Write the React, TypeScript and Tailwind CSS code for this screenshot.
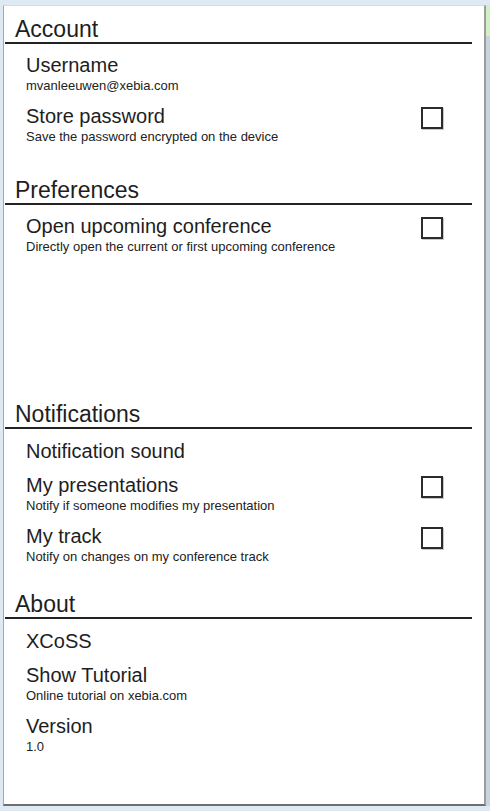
import React from "react";

type Item = { title: string; desc?: string; check?: boolean };

function Checkbox() {
  return (
    <div className="mt-[3px] w-[22px] h-[22px] shrink-0 border-2 border-[#2b2b2b] bg-white shadow-[1px_1px_0_0_#c8c8c8]" />
  );
}

function Row({ item }: { item: Item }) {
  return (
    <div className="flex w-[417px] justify-between">
      <div className="flex flex-col">
        <div className="text-[20px] leading-[24px] text-[#1e1e1e]">{item.title}</div>
        {item.desc && (
          <div className="text-[13px] leading-[17px] text-[#222]">{item.desc}</div>
        )}
      </div>
      {item.check && <Checkbox />}
    </div>
  );
}

function Section({
  title,
  items,
  mt,
  itemsMt,
}: {
  title: string;
  items: Item[];
  mt: string;
  itemsMt: string;
}) {
  return (
    <div className={mt}>
      <div className="ml-px w-[467px] border-b-2 border-[#222] pl-[10px] text-[23px] leading-[26px] text-[#1e1e1e]">
        {title}
      </div>
      <div className={`${itemsMt} ml-[22px] flex flex-col gap-[10px]`}>
        {items.map((it) => (
          <Row key={it.title} item={it} />
        ))}
      </div>
    </div>
  );
}

export default function App() {
  return (
    <div className="relative h-[811px] w-[490px] overflow-hidden bg-[#dfe9f4] font-['Liberation_Sans',Arial,sans-serif]">
      <div className="flex pl-[3px] pt-[5px]">
        <div className="h-[801px] w-[483px] border-l border-r-2 border-b-2 border-t border-l-[#a8a8a8] border-r-[#9c9c9c] border-b-[#6e6e6e] border-t-[#d4dde6] bg-white">
          <Section
            title="Account"
            mt="mt-[10px]"
            itemsMt="mt-[9px]"
            items={[
              { title: "Username", desc: "mvanleeuwen@xebia.com" },
              {
                title: "Store password",
                desc: "Save the password encrypted on the device",
                check: true,
              },
            ]}
          />
          <Section
            title="Preferences"
            mt="mt-[32px]"
            itemsMt="mt-[9px]"
            items={[
              {
                title: "Open upcoming conference",
                desc: "Directly open the current or first upcoming conference",
                check: true,
              },
            ]}
          />
          <Section
            title="Notifications"
            mt="mt-[146px]"
            itemsMt="mt-[10px]"
            items={[
              { title: "Notification sound" },
              {
                title: "My presentations",
                desc: "Notify if someone modifies my presentation",
                check: true,
              },
              {
                title: "My track",
                desc: "Notify on changes on my conference track",
                check: true,
              },
            ]}
          />
          <Section
            title="About"
            mt="mt-[26px]"
            itemsMt="mt-[10px]"
            items={[
              { title: "XCoSS" },
              { title: "Show Tutorial", desc: "Online tutorial on xebia.com" },
              { title: "Version", desc: "1.0" },
            ]}
          />
        </div>
        <div className="flex w-[4px] flex-col">
          <div className="h-[31px] bg-[#d3efc5]" />
          <div className="h-[770px] bg-[#c9d4df]" />
        </div>
      </div>
    </div>
  );
}
